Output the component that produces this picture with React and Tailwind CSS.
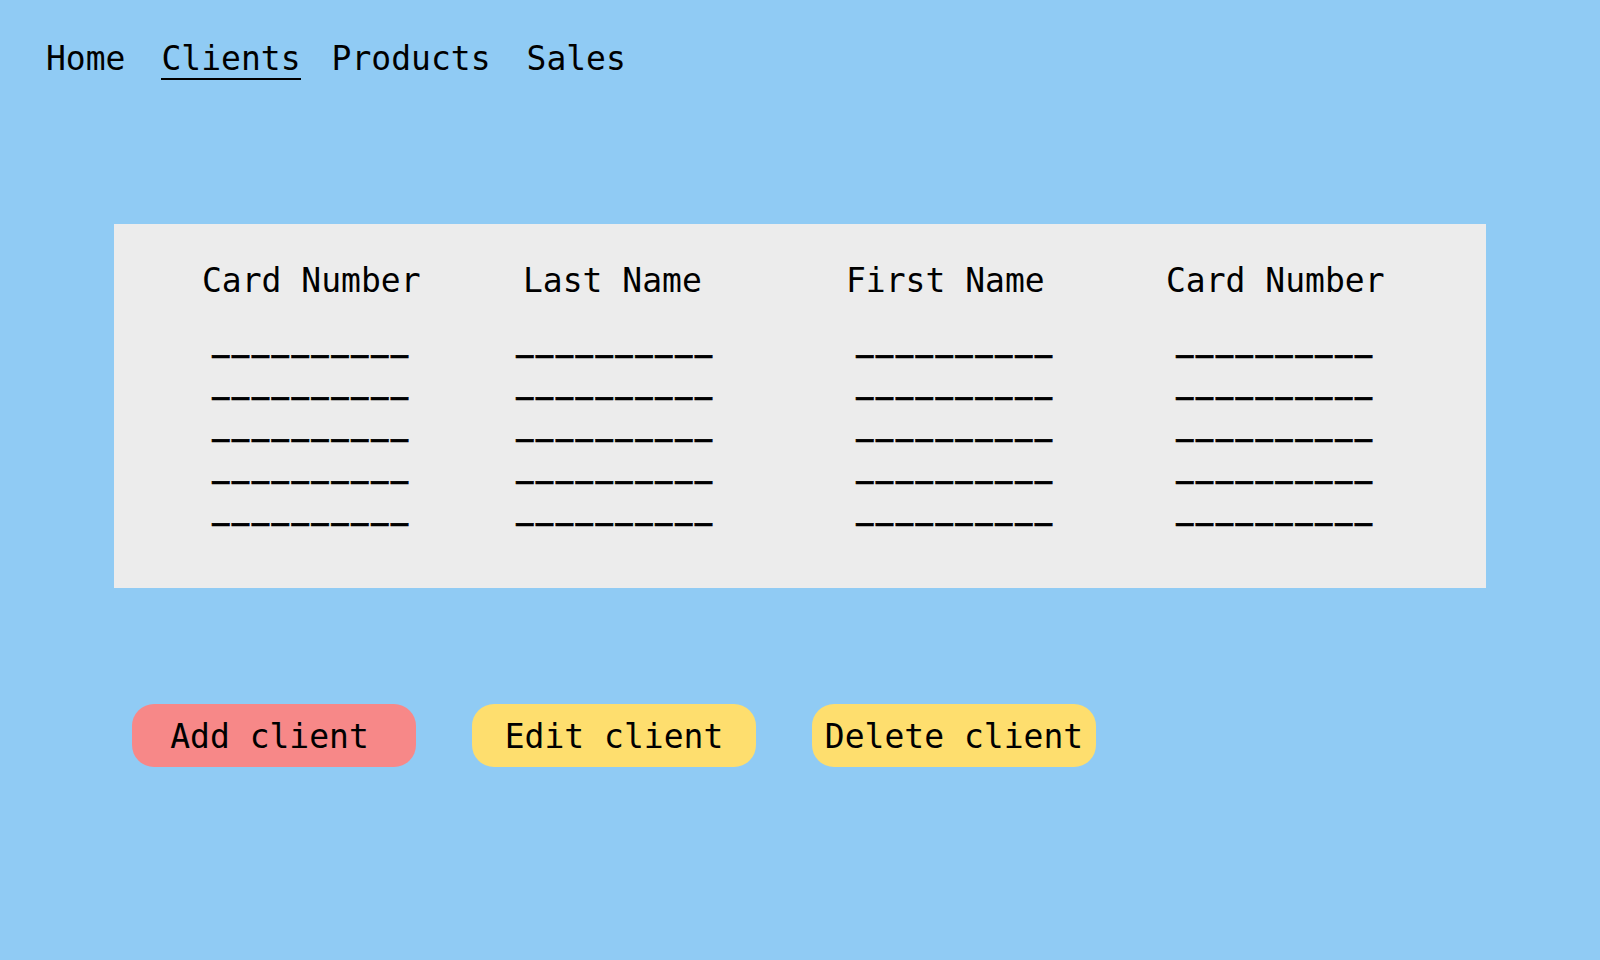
import React from 'react';

const navItems = [
  { label: 'Home', active: false, ml: 'ml-0' },
  { label: 'Clients', active: true, ml: 'ml-[36px]' },
  { label: 'Products', active: false, ml: 'ml-[31px]' },
  { label: 'Sales', active: false, ml: 'ml-[36px]' },
];

// each column: header + placeholder rows
const columns = [
  { title: 'Card Number', width: 'w-[314px]', headMl: 'ml-0', rowMl: 'ml-[10px]' },
  { title: 'Last Name', width: 'w-[330px]', headMl: 'ml-[7px]', rowMl: 'ml-0' },
  { title: 'First Name', width: 'w-[320px]', headMl: 'ml-0', rowMl: 'ml-[10px]' },
  { title: 'Card Number', width: 'w-[320px]', headMl: 'ml-0', rowMl: 'ml-[10px]' },
];

const rows = [1, 2, 3, 4, 5];

const buttons = [
  { label: 'Add client', color: 'bg-[#F78888]', pad: 'pr-[9px]' },
  { label: 'Edit client', color: 'bg-[#FEDE6E]', pad: 'pr-0' },
  { label: 'Delete client', color: 'bg-[#FEDE6E]', pad: 'pr-0' },
];

const App = () => {
  return (
    <div className="min-h-screen w-full bg-[#90CBF4] text-black font-['DejaVu_Sans_Mono','Liberation_Mono',monospace] text-[33px] leading-[38px]">
      {/* top navigation */}
      <nav className="flex pl-[46px] pt-[40px]">
        {navItems.map((item) => (
          <a
            key={item.label}
            href="#"
            className={`${item.ml} ${item.active ? 'border-b-2 border-black' : 'border-b-2 border-transparent'}`}
          >
            {item.label}
          </a>
        ))}
      </nav>

      {/* clients table */}
      <div className="mx-[114px] mt-[144px] h-[364px] bg-[#ECECEC] pt-[38px] pl-[88px] flex">
        {columns.map((col, i) => (
          <div key={i} className={`${col.width} flex flex-col`}>
            <div className={col.headMl}>{col.title}</div>
            <div className="mt-[21px]">
              {rows.map((r) => (
                <div
                  key={r}
                  className={`${col.rowMl} h-[41.9px] text-[29px] tracking-[2.4px] font-bold leading-[41.9px] [-webkit-text-stroke:0.6px_#000]`}
                >
                  __________
                </div>
              ))}
            </div>
          </div>
        ))}
      </div>

      {/* actions */}
      <div className="flex gap-[56px] pl-[132px] mt-[116px]">
        {buttons.map((btn) => (
          <button
            key={btn.label}
            className={`${btn.color} ${btn.pad} w-[284px] h-[63px] pt-[2px] rounded-[22px] flex items-center justify-center`}
          >
            {btn.label}
          </button>
        ))}
      </div>
    </div>
  );
};

export default App;
